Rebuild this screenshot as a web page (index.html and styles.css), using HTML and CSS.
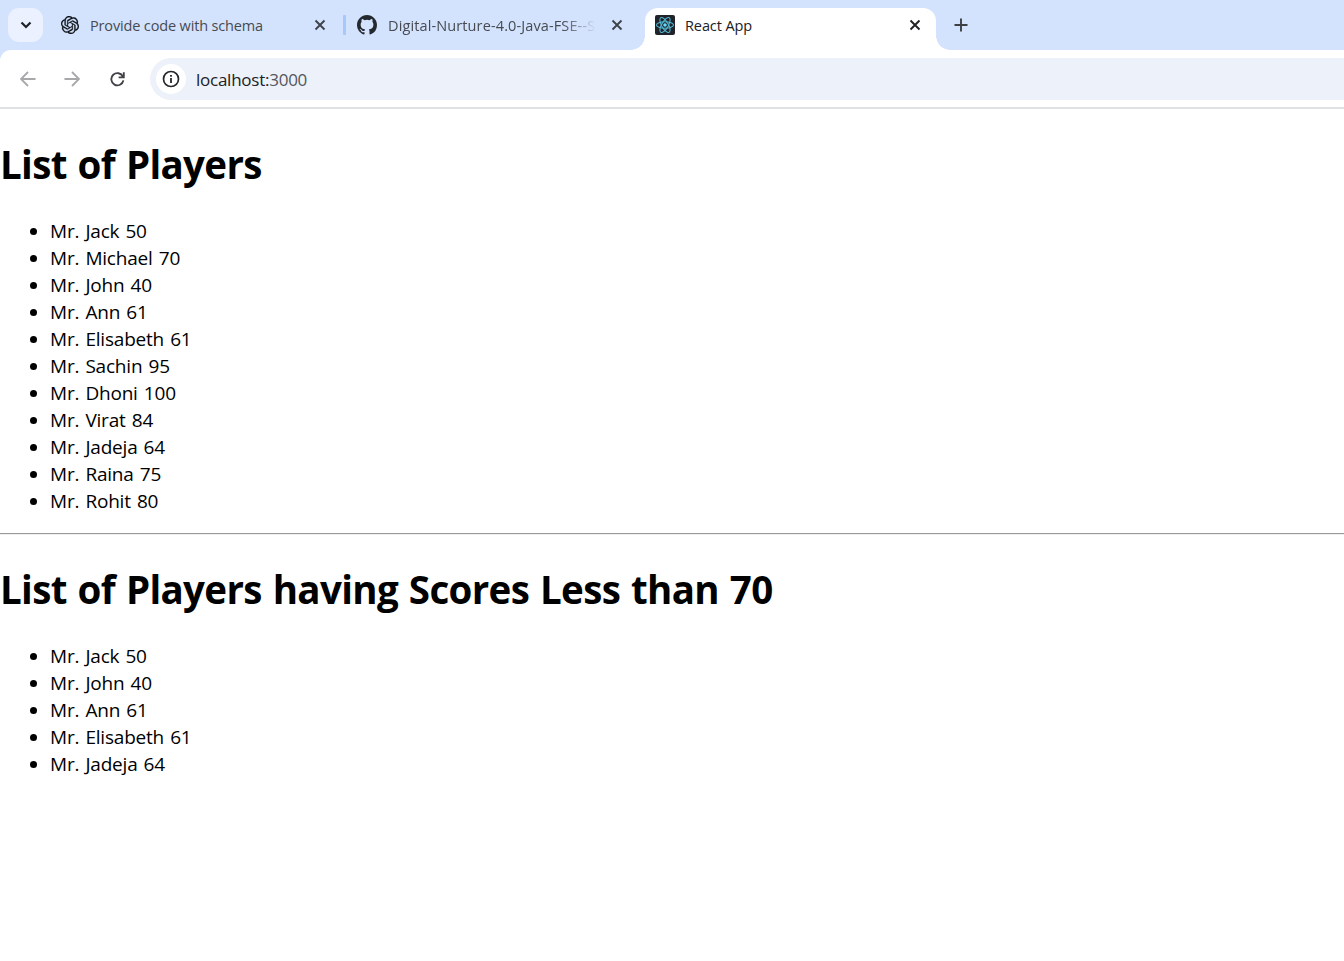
FILE: index.html
```html
<!DOCTYPE html>
<html lang="en">
<head>
<meta charset="utf-8">
<title>React App</title>
<link rel="stylesheet" href="styles.css">
</head>
<body>
<header class="browser">
  <div class="tabstrip">
    <button class="tab-search" aria-label="Search tabs"><svg width="12" height="8" viewBox="0 0 12 8"><path d="M1.5 1.5 6 6l4.500-4.500" fill="none" stroke="#1f2227" stroke-width="2.200"/></svg></button>
    <div class="tab tab-first">
      <svg class="favicon openai" viewBox="0 0 24 24"><path fill="#0d1117" stroke="#0d1117" stroke-width=".3" d="M22.2819 9.8211a5.9847 5.9847 0 0 0-.5157-4.9108 6.0462 6.0462 0 0 0-6.5098-2.9A6.0651 6.0651 0 0 0 4.9807 4.1818a5.9847 5.9847 0 0 0-3.9977 2.9 6.0462 6.0462 0 0 0 .7427 7.0966 5.98 5.98 0 0 0 .511 4.9107 6.051 6.051 0 0 0 6.5146 2.9001A5.9847 5.9847 0 0 0 13.2599 24a6.0557 6.0557 0 0 0 5.7718-4.2058 5.9894 5.9894 0 0 0 3.9977-2.9001 6.0557 6.0557 0 0 0-.7475-7.0729zm-9.022 12.6081a4.4755 4.4755 0 0 1-2.8764-1.0408l.1419-.0804 4.7783-2.7582a.7948.7948 0 0 0 .3927-.6813v-6.7369l2.02 1.1686a.071.071 0 0 1 .038.052v5.5826a4.504 4.504 0 0 1-4.4945 4.4944zm-9.6607-4.1254a4.4708 4.4708 0 0 1-.5346-3.0137l.142.0852 4.783 2.7582a.7712.7712 0 0 0 .7806 0l5.8428-3.3685v2.3324a.0804.0804 0 0 1-.0332.0615L9.74 19.9502a4.4992 4.4992 0 0 1-6.1408-1.6464zM2.3408 7.8956a4.485 4.485 0 0 1 2.3655-1.9728V11.6a.7664.7664 0 0 0 .3879.6765l5.8144 3.3543-2.0201 1.1685a.0757.0757 0 0 1-.071 0l-4.8303-2.7865A4.504 4.504 0 0 1 2.3408 7.872zm16.5963 3.8558L13.1038 8.364 15.1192 7.2a.0757.0757 0 0 1 .071 0l4.8303 2.7913a4.4944 4.4944 0 0 1-.6765 8.1042v-5.6772a.79.79 0 0 0-.407-.667zm2.0107-3.0231l-.142-.0852-4.7735-2.7818a.7759.7759 0 0 0-.7854 0L9.409 9.2297V6.8974a.0662.0662 0 0 1 .0284-.0615l4.8303-2.7866a4.4992 4.4992 0 0 1 6.6802 4.66zM8.3065 12.863l-2.02-1.1638a.0804.0804 0 0 1-.038-.0567V6.0742a4.4992 4.4992 0 0 1 7.3757-3.4537l-.142.0805L8.704 5.459a.7948.7948 0 0 0-.3927.6813zm1.0976-2.3654l2.602-1.4998 2.6069 1.4998v2.9994l-2.5974 1.4997-2.6067-1.4997Z"/></svg>
      <span class="tab-title t1">Provide code with schema</span>
      <svg class="close" viewBox="0 0 12 12"><path d="m1.500 1.500 9 9m0-9-9 9"/></svg>
    </div>
    <i class="separator"></i>
    <div class="tab tab-second">
      <svg class="favicon" viewBox="0 0 16 16"><path fill="#24292f" d="M8 0C3.580 0 0 3.580 0 8c0 3.540 2.290 6.530 5.470 7.590.4.070.55-.17.55-.38 0-.19-.01-.82-.01-1.490-2.010.37-2.530-.49-2.690-.94-.09-.23-.48-.94-.82-1.130-.28-.15-.68-.52-.01-.53.63-.01 1.080.58 1.230.82.72 1.210 1.870.87 2.330.66.07-.52.28-.87.51-1.070-1.780-.2-3.640-.89-3.640-3.950 0-.87.31-1.590.82-2.150-.08-.2-.36-1.020.08-2.120 0 0 .67-.21 2.200.82a7.600 7.600 0 0 1 4 0c1.530-1.040 2.200-.82 2.200-.82.44 1.100.16 1.920.08 2.120.51.56.82 1.270.82 2.150 0 3.070-1.870 3.750-3.650 3.950.29.25.54.73.54 1.480 0 1.070-.01 1.930-.01 2.200 0 .21.15.46.55.38A8.010 8.010 0 0 0 16 8c0-4.420-3.580-8-8-8Z"/></svg>
      <span class="tab-title t2">Digital-Nurture-4.0-Java-FSE--S</span>
      <svg class="close" viewBox="0 0 12 12"><path d="m1.500 1.500 9 9m0-9-9 9"/></svg>
    </div>
    <div class="tab tab-active">
      <svg class="favicon" viewBox="0 0 20 20"><rect width="20" height="20" rx="2" fill="#20232a"/><g fill="none" stroke="#53b9d5" stroke-width="1.100"><ellipse cx="10" cy="10" rx="8.500" ry="3.300"/><ellipse cx="10" cy="10" rx="8.500" ry="3.300" transform="rotate(60 10 10)"/><ellipse cx="10" cy="10" rx="8.500" ry="3.300" transform="rotate(120 10 10)"/></g><circle cx="10" cy="10" r="1.800" fill="#61dafb"/></svg>
      <span class="tab-title t3">React App</span>
      <svg class="close" viewBox="0 0 12 12"><path d="m1.500 1.500 9 9m0-9-9 9"/></svg>
    </div>
    <svg class="new-tab" width="14" height="14" viewBox="0 0 14 14"><path d="M7 .5v13M.5 7h13" stroke="#3c4043" stroke-width="1.900"/></svg>
  </div>
  <div class="toolbar">
    <svg class="nav" viewBox="0 0 16 16"><path d="M8 1 1 8l7 7M1 8h14.500" stroke="#a7a8aa"/></svg>
    <svg class="nav forward" viewBox="0 0 16 16"><path d="m8 1 7 7-7 7m7-7H.5" stroke="#a7a8aa"/></svg>
    <svg class="nav reload" viewBox="0 0 16 16"><path d="M13.800 5.500A6.500 6.500 0 1 0 14.300 9.500M14.700.7v5.500H9.200" stroke="#3f4246" stroke-width="2"/></svg>
    <div class="omnibox">
      <span class="site-info"><svg width="18" height="18" viewBox="0 0 18 18"><circle cx="9" cy="9" r="7.500" fill="none" stroke="#24272b" stroke-width="1.700"/><path d="M9 8v5M9 5v1.800" stroke="#24272b" stroke-width="1.800"/></svg></span>
      <span class="url">localhost:<span class="port">3000</span></span>
    </div>
  </div>
</header>
<main class="page">
  <h1>List of Players</h1>
  <ul>
    <li>Mr. Jack 50</li>
    <li>Mr. Michael 70</li>
    <li>Mr. John 40</li>
    <li>Mr. Ann 61</li>
    <li>Mr. Elisabeth 61</li>
    <li>Mr. Sachin 95</li>
    <li>Mr. Dhoni 100</li>
    <li>Mr. Virat 84</li>
    <li>Mr. Jadeja 64</li>
    <li>Mr. Raina 75</li>
    <li>Mr. Rohit 80</li>
  </ul>
  <hr>
  <h1>List of Players having Scores Less than 70</h1>
  <ul>
    <li>Mr. Jack 50</li>
    <li>Mr. John 40</li>
    <li>Mr. Ann 61</li>
    <li>Mr. Elisabeth 61</li>
    <li>Mr. Jadeja 64</li>
  </ul>
</main>
</body>
</html>
```
FILE: styles.css
```css
* { box-sizing: border-box; }
body {
  margin: 0;
  background: #fff;
  color: #000;
  font-family: "Open Sans", "Noto Sans", sans-serif;
}
svg { display: block; flex: none; }
.browser { background: #d3e2fd; }
.tabstrip {
  display: flex;
  height: 50px;
  padding: 8px 0 0 8px;
}
.tab-search {
  display: flex;
  align-items: center;
  justify-content: center;
  width: 35px;
  height: 34px;
  padding: 0;
  border: 0;
  border-radius: 11px;
  background: #ebf1fe;
}
.tab {
  display: flex;
  align-items: center;
  height: 34px;
  font-size: 14.500px;
  color: #474b51;
}
.favicon { width: 20px; height: 20px; }
.openai { width: 18px; height: 18px; }
.tab-title {
  flex: 1;
  overflow: hidden;
  margin-left: 11px;
  line-height: 22px;
  white-space: nowrap;
  padding-top: 1px;
}
.t1 { letter-spacing: -0.150px; }
.t2 {
  flex: none;
  width: 208px;
  letter-spacing: 0.120px;
  mask-image: linear-gradient(90deg, #000 84%, transparent);
}
.t3 { margin-left: 10px; letter-spacing: -0.100px; }
.close {
  width: 12px;
  height: 12px;
  margin-left: auto;
  fill: none;
  stroke: #3f4349;
  stroke-width: 1.900;
}
.tab-first { width: 265px; margin-left: 18px; }
.separator {
  width: 3px;
  height: 20px;
  margin: 7px 0 0 17px;
  border-radius: 1px;
  background: #a8c7fa;
}
.tab-second {
  width: 266px;
  margin-left: 11px;
}
.tab-active {
  position: relative;
  width: 291px;
  height: 42px;
  margin-left: 22px;
  padding: 0 15px 8px 10px;
  border-radius: 13px 13px 0 0;
  background: #fff;
  color: #202124;
}
.tab-active .close { stroke: #202124; }
.tab-active::before,
.tab-active::after {
  content: "";
  position: absolute;
  bottom: 0;
  width: 14px;
  height: 14px;
}
.tab-active::before {
  right: 100%;
  background: radial-gradient(circle at 0 0, transparent 13.500px, #fff 14px);
}
.tab-active::after {
  left: 100%;
  background: radial-gradient(circle at 100% 0, transparent 13.500px, #fff 14px);
}
.new-tab { margin: 10px 0 0 18px; }
.toolbar {
  display: flex;
  align-items: center;
  height: 59px;
  padding-left: 20px;
  border-bottom: 2px solid #dfe1e3;
  border-radius: 11px 0 0 0;
  background: #fff;
}
.nav {
  width: 16px;
  height: 16px;
  fill: none;
  stroke-width: 1.800;
}
.forward { margin-left: 28px; }
.reload { width: 15px; margin-left: 30px; }
.omnibox {
  display: flex;
  flex: 1;
  align-items: center;
  height: 42px;
  margin-left: 25px;
  padding-left: 6px;
  border-radius: 21px 0 0 21px;
  background: #ecf1fa;
}
.site-info {
  display: flex;
  align-items: center;
  justify-content: center;
  width: 30px;
  height: 30px;
  border-radius: 50%;
  background: #fff;
}
.url {
  margin-left: 10px;
  padding-top: 1px;
  font-size: 17px;
  letter-spacing: -0.250px;
  color: #202124;
}
.port { color: #53565b; }
.page {
  display: flow-root;
  padding-top: 1px;
  font-size: 19px;
}
h1 {
  margin: 28px 0 27px;
  font-size: 38.500px;
  font-weight: 700;
  line-height: 53px;
  letter-spacing: -0.650px;
  word-spacing: 1.500px;
  white-space: nowrap;
}
ul {
  margin: 0 0 18px;
  padding-left: 50px;
  line-height: 27px;
}
li {
  letter-spacing: -0.200px;
  word-spacing: 1.400px;
}
hr {
  margin: 0;
  border: 0;
  height: 2px;
  border-top: 1px solid #9a9a9a;
  background: #eee;
}
```
